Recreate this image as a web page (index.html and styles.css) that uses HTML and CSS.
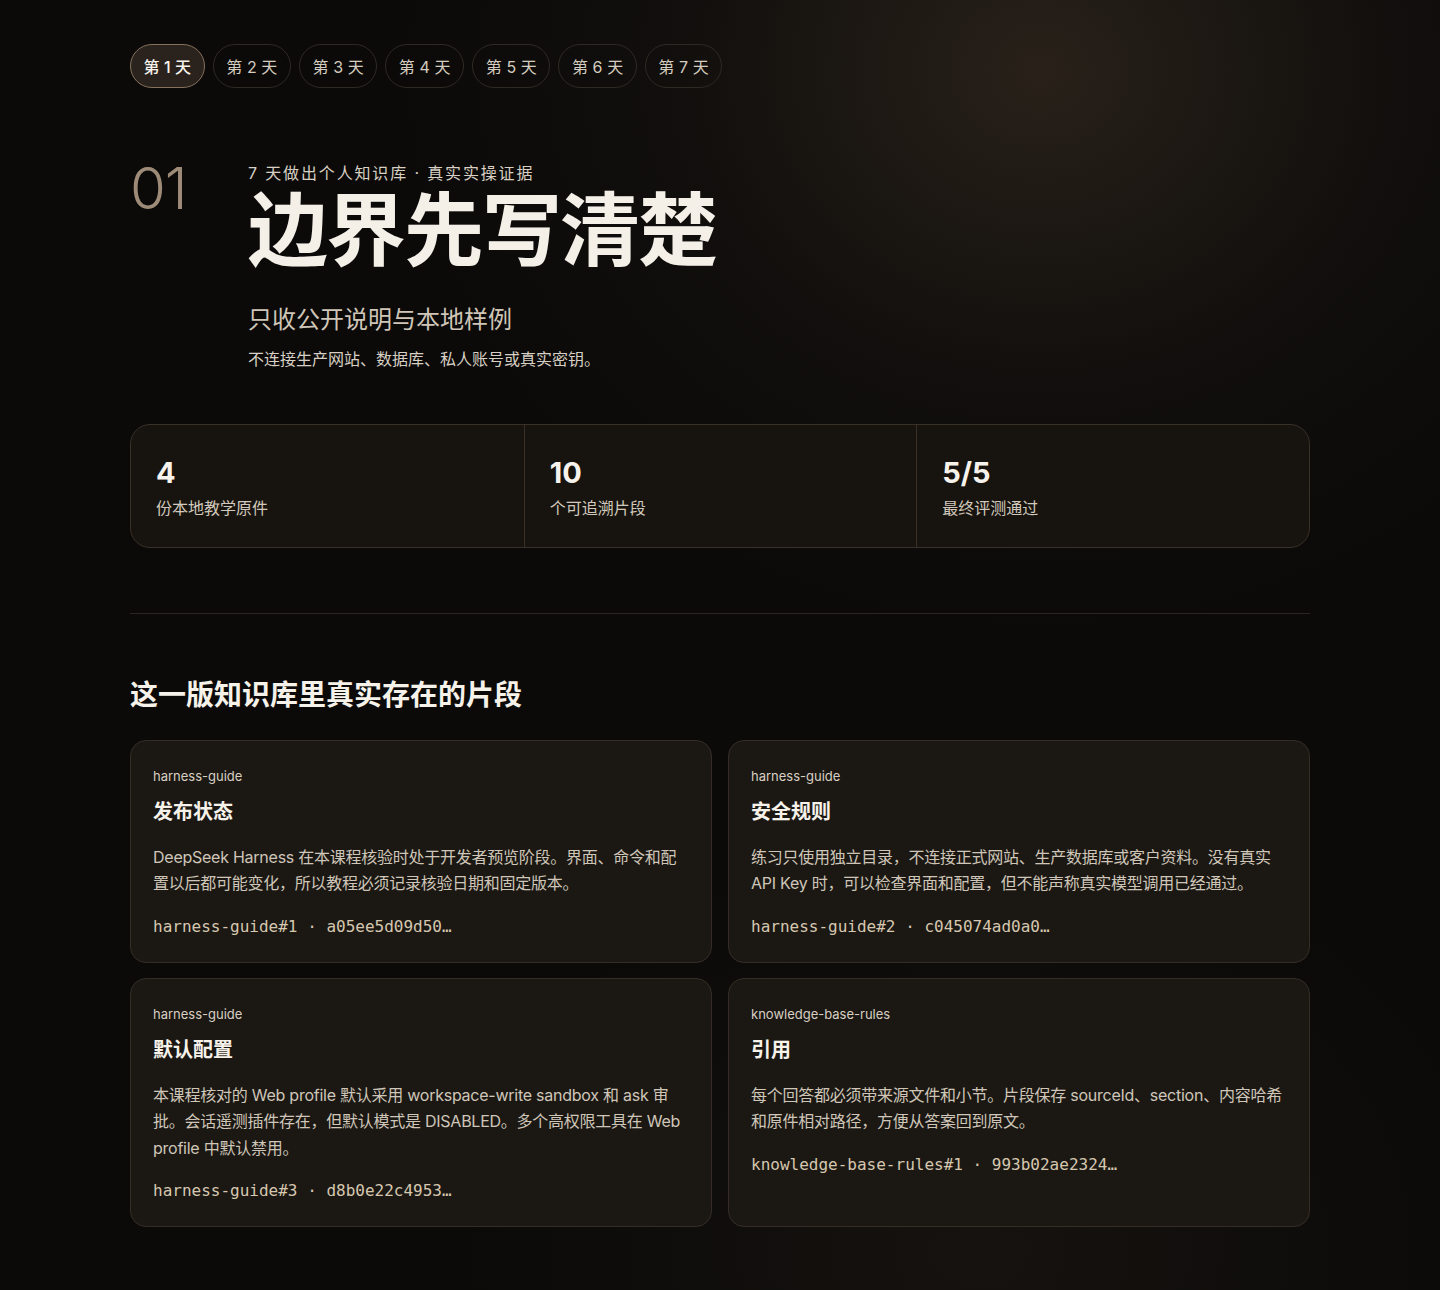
FILE: index.html
```html
<!DOCTYPE html>
<html lang="zh-CN">
<head>
<meta charset="utf-8">
<title>第 1 天 · 边界先写清楚</title>
<link rel="stylesheet" href="styles.css">
</head>
<body>
<main class="page">
  <nav class="tabs">
    <a class="tab active">第 1 天</a>
    <a class="tab">第 2 天</a>
    <a class="tab">第 3 天</a>
    <a class="tab">第 4 天</a>
    <a class="tab">第 5 天</a>
    <a class="tab">第 6 天</a>
    <a class="tab">第 7 天</a>
  </nav>

  <header class="hero">
    <div class="hero-num">01</div>
    <div class="hero-body">
      <p class="kicker">7 天做出个人知识库 · 真实实操证据</p>
      <h1 class="title">边界先写清楚</h1>
      <p class="subtitle">只收公开说明与本地样例</p>
      <p class="desc">不连接生产网站、数据库、私人账号或真实密钥。</p>
    </div>
  </header>

  <section class="stats">
    <div class="stat">
      <div class="stat-num">4</div>
      <div class="stat-label">份本地教学原件</div>
    </div>
    <div class="stat">
      <div class="stat-num">10</div>
      <div class="stat-label">个可追溯片段</div>
    </div>
    <div class="stat">
      <div class="stat-num">5/5</div>
      <div class="stat-label">最终评测通过</div>
    </div>
  </section>

  <hr class="divider">

  <section class="chunks">
    <h2 class="section-title">这一版知识库里真实存在的片段</h2>
    <div class="grid">
      <article class="card">
        <div class="card-src">harness-guide</div>
        <h3 class="card-title">发布状态</h3>
        <p class="card-text">DeepSeek Harness 在本课程核验时处于开发者预览阶段。界面、命令和配置以后都可能变化，所以教程必须记录核验日期和固定版本。</p>
        <div class="card-ref">harness-guide#1 · a05ee5d09d50…</div>
      </article>
      <article class="card">
        <div class="card-src">harness-guide</div>
        <h3 class="card-title">安全规则</h3>
        <p class="card-text">练习只使用独立目录，不连接正式网站、生产数据库或客户资料。没有真实 API Key 时，可以检查界面和配置，但不能声称真实模型调用已经通过。</p>
        <div class="card-ref">harness-guide#2 · c045074ad0a0…</div>
      </article>
      <article class="card">
        <div class="card-src">harness-guide</div>
        <h3 class="card-title">默认配置</h3>
        <p class="card-text">本课程核对的 Web profile 默认采用 workspace-write sandbox 和 ask 审批。会话遥测插件存在，但默认模式是 DISABLED。多个高权限工具在 Web profile 中默认禁用。</p>
        <div class="card-ref">harness-guide#3 · d8b0e22c4953…</div>
      </article>
      <article class="card">
        <div class="card-src">knowledge-base-rules</div>
        <h3 class="card-title">引用</h3>
        <p class="card-text">每个回答都必须带来源文件和小节。片段保存 sourceId、section、内容哈希和原件相对路径，方便从答案回到原文。</p>
        <div class="card-ref">knowledge-base-rules#1 · 993b02ae2324…</div>
      </article>
    </div>
  </section>
</main>
</body>
</html>
```

FILE: styles.css
```css
* { box-sizing: border-box; }

html, body {
  margin: 0;
  padding: 0;
}

body {
  min-height: 1290px;
  background-color: #0b0a09;
  background-image:
    radial-gradient(ellipse 640px 560px at 1040px 70px, rgba(52, 42, 32, 0.72), rgba(30, 25, 20, 0.35) 55%, rgba(11, 10, 9, 0) 100%),
    radial-gradient(ellipse 520px 420px at 980px 1250px, rgba(34, 28, 22, 0.45), rgba(11, 10, 9, 0) 100%);
  color: #f4efe7;
  font-family: Inter, "Noto Sans CJK SC", "Noto Sans", sans-serif;
}

.page {
  width: 1180px;
  margin: 0 auto;
  padding: 44px 0 65px;
}

/* tabs */
.tabs {
  display: flex;
  gap: 8px;
}

.tab {
  display: flex;
  align-items: center;
  height: 44px;
  padding: 0 12.5px;
  border: 1px solid #2e2923;
  border-radius: 22px;
  font-size: 16px;
  color: #d4ccbf;
  letter-spacing: 0.1px;
}

.tab.active {
  background: #2a231d;
  border-color: #85715c;
  color: #f7f3ec;
  font-weight: 500;
}

/* hero */
.hero {
  display: grid;
  grid-template-columns: 118px 1fr;
  margin-top: 73px;
}

.hero-num {
  font-size: 58px;
  font-weight: 300;
  line-height: 1;
  color: #9d8b78;
  margin-top: -2px;
  letter-spacing: -1px;
}

.hero-body p { margin: 0; }

.kicker {
  font-size: 16px;
  line-height: 24px;
  letter-spacing: 1.85px;
  color: #d9d0c3;
}

.title {
  margin: 5px 0 0;
  font-size: 80px;
  line-height: 80px;
  font-weight: 700;
  letter-spacing: -2px;
  color: #f4f0e8;
}

.subtitle {
  margin-top: 34px !important;
  font-size: 24px;
  line-height: 32px;
  color: #cfc6b8;
}

.desc {
  margin-top: 11px !important;
  font-size: 16px;
  line-height: 24px;
  color: #d8d0c4;
}

/* stats */
.stats {
  display: grid;
  grid-template-columns: repeat(3, 1fr);
  margin-top: 53px;
  height: 124px;
  border: 1px solid #393027;
  border-radius: 20px;
  background: #17140f;
  overflow: hidden;
}

.stat {
  padding: 31px 25px 26px;
}

.stat + .stat {
  border-left: 1px solid #393027;
}

.stat-num {
  font-size: 29px;
  line-height: 34px;
  font-weight: 700;
  color: #f7f3ec;
}

.stat-label {
  margin-top: 6px;
  font-size: 16px;
  line-height: 24px;
  color: #d2c9bc;
}

/* divider */
.divider {
  margin: 65px 0 0;
  border: 0;
  border-top: 1px solid #2b2520;
  height: 0;
}

/* chunks */
.section-title {
  margin: 63px 0 0;
  font-size: 28px;
  line-height: 36px;
  font-weight: 700;
  color: #f6f2ea;
}

.grid {
  display: grid;
  grid-template-columns: 1fr 1fr;
  gap: 15px 16px;
  margin-top: 27px;
}

.card {
  padding: 26px 22px 23px;
  border: 1px solid #352d25;
  border-radius: 16px;
  background: #1b1814;
}

.card-src {
  font-size: 13px;
  line-height: 18px;
  color: #d8cfc2;
}

.card-title {
  margin: 13px 0 0;
  font-size: 20px;
  line-height: 28px;
  font-weight: 700;
  color: #f6f2ea;
}

.card-text {
  margin: 18px 0 0;
  font-size: 16px;
  line-height: 26.4px;
  letter-spacing: -0.25px;
  color: #cfc6b8;
}

.card-ref {
  margin-top: 18px;
  font-family: "DejaVu Sans Mono", "Liberation Mono", monospace;
  font-size: 16px;
  line-height: 24px;
  color: #d6c7af;
}
```
